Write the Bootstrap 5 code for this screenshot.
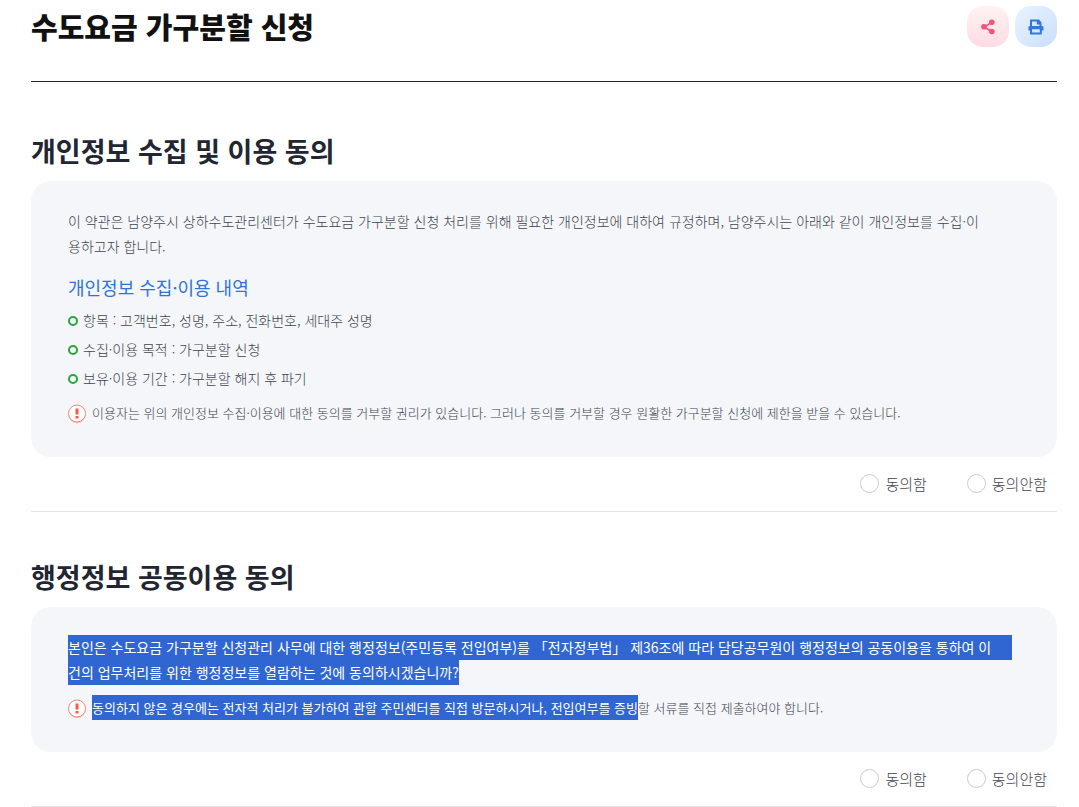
<!DOCTYPE html>
<html lang="ko">
<head>
<meta charset="utf-8">
<meta name="viewport" content="width=device-width, initial-scale=1">
<title>수도요금 가구분할 신청</title>
<link href="https://cdn.jsdelivr.net/npm/bootstrap@5.3.0/dist/css/bootstrap.min.css" rel="stylesheet">
<style>
  body { font-family: "Noto Sans CJK KR", sans-serif; font-size: 14px; line-height: 25px; font-weight: 300; color: #3e444f; background: #fff; }
  .page { padding: 6px 22px 0 31px; }
  .page-head { height: 76px; border-bottom: 1px solid #222632; margin-bottom: 4px; }
  .page-title { font-size: 29px; line-height: 40px; font-weight: 900; color: #111; }
  .tools { gap: 6px; }
  .tool-btn { width: 42px; height: 41px; border: 0; border-radius: 16px; padding: 0; }
  .tool-share { background: linear-gradient(#fff3f2, #ffdbe3); color: #f4517c; }
  .tool-print { background: linear-gradient(135deg, #e9f3ff, #c9dfff); color: #2f78dc; }
  .consent { padding-top: 45px; border-bottom: 1px solid #e5e5e5; }
  .consent-title { font-size: 27px; line-height: 40px; font-weight: 700; color: #222632; margin-bottom: 10px; }
  .terms { background: #f4f6fa; border-radius: 20px; padding: 28px 45px 32px 37px; }
  .terms-sub { font-size: 18px; line-height: 29px; font-weight: 400; color: #2e74d8; margin: 14px 0 6px; }
  .ring-list { gap: 4px; margin-bottom: 9px; }
  .ring-list li { display: flex; align-items: center; gap: 5px; }
  .ring-list li::before { content: ""; flex: none; width: 10px; height: 10px; border: 2px solid #28a63c; border-radius: 50%; }
  .note { gap: 6px; font-size: 13px; }
  .terms > p + .note { margin-top: 10px; }
  .note svg { flex: none; margin-top: 4px; }
  .picked { background: #2f66d2; color: #fff; font-weight: 400; }
  span.picked:not(.d-block) { padding: 3px 0; }
  .choices { gap: 40px; padding: 14px 10px 15px; font-size: 15px; }
  .choice { gap: 6px; }
  .choice .form-check-input { width: 19px; height: 19px; margin: 0; border: 1px solid #ccc; }
</style>
</head>
<body>
<main class="page">
  <header class="page-head d-flex justify-content-between align-items-start">
    <h1 class="page-title mb-0">수도요금 가구분할 신청</h1>
    <div class="tools d-flex">
      <button type="button" class="tool-btn tool-share d-flex align-items-center justify-content-center" aria-label="공유">
        <svg width="14" height="16" viewBox="0 0 14 16" fill="currentColor"><path d="M10.800 3.300 3.200 8l7.600 4.700" fill="none" stroke="currentColor" stroke-width="1.600"/><circle cx="10.800" cy="3.300" r="2.800"/><circle cx="3" cy="7.800" r="2.800"/><circle cx="10.800" cy="12.500" r="2.800"/></svg>
      </button>
      <button type="button" class="tool-btn tool-print d-flex align-items-center justify-content-center" aria-label="인쇄">
        <svg width="16" height="16" viewBox="0 0 16 16" fill="none" stroke="currentColor" stroke-width="2"><path d="M3 8V1.500h7.500L12.500 3.800V8M9.800 1v3.500h3"/><path d="M1.800 7h12.400q1.300 0 1.300 1.300V11.500H13v-1.300H3v1.300H.5V8.300Q.5 7 1.800 7z" fill="currentColor" stroke="none"/><path d="M3 10v4.500h9.800V10"/></svg>
      </button>
    </div>
  </header>

  <section class="consent">
    <h2 class="consent-title">개인정보 수집 및 이용 동의</h2>
    <div class="terms">
      <p class="mb-0">이 약관은 남양주시 상하수도관리센터가 수도요금 가구분할 신청 처리를 위해 필요한 개인정보에 대하여 규정하며, 남양주시는 아래와 같이 개인정보를 수집·이<br>용하고자 합니다.</p>
      <h3 class="terms-sub">개인정보 수집·이용 내역</h3>
      <ul class="ring-list list-unstyled d-flex flex-column">
        <li>항목 : 고객번호, 성명, 주소, 전화번호, 세대주 성명</li>
        <li>수집·이용 목적 : 가구분할 신청</li>
        <li>보유·이용 기간 : 가구분할 해지 후 파기</li>
      </ul>
      <div class="note d-flex align-items-start">
        <svg width="18" height="21" viewBox="0 0 18 21"><circle cx="9" cy="11" r="8.500" fill="#ff6b5e" opacity=".3"/><circle cx="9" cy="9.500" r="8.500" fill="#fff" stroke="#ff8176"/><path d="M9 4.500v6M9 12v2.500" stroke="#fa5a4d" stroke-width="3"/></svg>
        <p class="mb-0">이용자는 위의 개인정보 수집·이용에 대한 동의를 거부할 권리가 있습니다. 그러나 동의를 거부할 경우 원활한 가구분할 신청에 제한을 받을 수 있습니다.</p>
      </div>
    </div>
    <div class="choices d-flex justify-content-end">
      <div class="choice d-flex align-items-center"><input class="form-check-input" type="radio" name="privacy" id="privacy-yes"><label for="privacy-yes">동의함</label></div>
      <div class="choice d-flex align-items-center"><input class="form-check-input" type="radio" name="privacy" id="privacy-no"><label for="privacy-no">동의안함</label></div>
    </div>
  </section>

  <section class="consent">
    <h2 class="consent-title">행정정보 공동이용 동의</h2>
    <div class="terms">
      <p class="mb-0"><span class="picked d-block">본인은 수도요금 가구분할 신청관리 사무에 대한 행정정보(주민등록 전입여부)를 「전자정부법」 제36조에 따라 담당공무원이 행정정보의 공동이용을 통하여 이</span><span class="picked">건의 업무처리를 위한 행정정보를 열람하는 것에 동의하시겠습니까?</span></p>
      <div class="note d-flex align-items-start">
        <svg width="18" height="21" viewBox="0 0 18 21"><circle cx="9" cy="11" r="8.500" fill="#ff6b5e" opacity=".3"/><circle cx="9" cy="9.500" r="8.500" fill="#fff" stroke="#ff8176"/><path d="M9 4.500v6M9 12v2.500" stroke="#fa5a4d" stroke-width="3"/></svg>
        <p class="mb-0"><span class="picked">동의하지 않은 경우에는 전자적 처리가 불가하여 관할 주민센터를 직접 방문하시거나, 전입여부를 증빙</span>할 서류를 직접 제출하여야 합니다.</p>
      </div>
    </div>
    <div class="choices d-flex justify-content-end">
      <div class="choice d-flex align-items-center"><input class="form-check-input" type="radio" name="sharing" id="sharing-yes"><label for="sharing-yes">동의함</label></div>
      <div class="choice d-flex align-items-center"><input class="form-check-input" type="radio" name="sharing" id="sharing-no"><label for="sharing-no">동의안함</label></div>
    </div>
  </section>
</main>
<script src="https://cdn.jsdelivr.net/npm/bootstrap@5.3.0/dist/js/bootstrap.bundle.min.js"></script>
</body>
</html>
